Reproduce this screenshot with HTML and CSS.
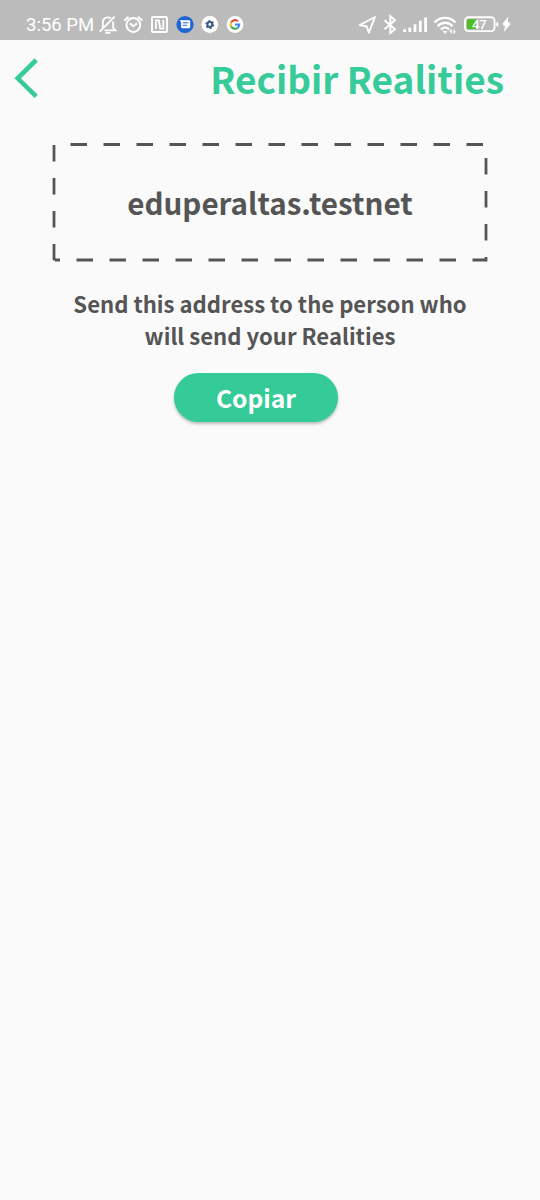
FILE: index.html
```html
<!DOCTYPE html>
<html lang="es">
<head>
<meta charset="utf-8">
<title>Recibir Realities</title>
<link rel="stylesheet" href="styles.css">
</head>
<body>
<div class="status">
  <span class="time">3:56 PM</span>
  <svg class="icons-left" width="146" height="24" viewBox="98 13 146 24" fill="none" stroke="#fff" stroke-width="1.9">
    <path d="M104.500 30.400H115.500L113.200 27.800V21.500M102.800 27.800V23c0-3.500 2.100-5.600 5-5.600 1.200 0 2.200.300 3.100.900M99.700 31.600 114.600 16.600"/>
    <path d="M105.300 32.900h5" stroke-width="1.800"/>
    <circle cx="133.300" cy="25" r="6.900" stroke-width="2"/>
    <path d="M130 23.300 133.100 26.200 137 23.400M124.300 20.500l4.300-3.800M142.300 20.500 138 16.700" stroke-width="2"/>
    <rect x="152" y="17" width="15" height="15" rx="1" stroke-width="1.900"/>
    <path d="M155.900 28.900V20.300H158.900L160.200 27.600M158.900 21.500 160.200 28.600H163.300V19.900" stroke-width="1.700"/>
    <g stroke="none">
      <circle cx="185" cy="24.500" r="8.600" fill="#1f66d2"/>
      <path d="M179.300 20.300h9.700a1.200 1.200 0 0 1 1.200 1.200v5.500a1.200 1.200 0 0 1-1.200 1.200h-6.700a1.200 1.200 0 0 1-1.200-1.200v-5z" fill="#fff"/>
      <path d="M182.800 22.800h5.600M182.800 25.300h4.200" stroke="#1f66d2" stroke-width="1"/>
      <circle cx="209.800" cy="24.500" r="8.400" fill="#fff"/>
      <circle cx="235" cy="24.500" r="8.400" fill="#fff"/>
    </g>
    <circle cx="209.800" cy="24.500" r="2.400" stroke="#3c5b84" stroke-width="2"/>
    <circle cx="209.800" cy="24.500" r="3.800" stroke="#3c5b84" stroke-width="1.300" stroke-dasharray="2 1.979"/>
    <g stroke-width="2">
      <path d="M238 21.300a4.300 4.300 0 0 0-6.900 1.300" stroke="#ea4335"/>
      <path d="M231.100 22.600a4.300 4.300 0 0 0 0 4" stroke="#fbbc05"/>
      <path d="M231.100 26.600a4.300 4.300 0 0 0 6.600 1.100" stroke="#34a853"/>
      <path d="M237.700 27.700a4.300 4.300 0 0 0 1.500-3.200H235" stroke="#4285f4"/>
    </g>
  </svg>
  <svg class="icons-right" width="154" height="24" viewBox="358 13 154 24" fill="none" stroke="#fff" stroke-width="1.900">
    <path d="M359.800 25 375 17 368.800 32.800 366.800 26.500z" stroke-linejoin="round"/>
    <path d="M384.500 20.300 395 29.200 390.300 33V16.200L395 20.300 384.500 29.200"/>
    <path d="M404.600 32v-2.800M409.800 32v-4.500M415 32v-7.800M420.300 32v-11.200M425.600 32v-14.500" stroke-width="2.800"/>
    <path d="M434.500 22.500c6-6.300 15-6.300 21 0M437.500 26.200c4.500-4.600 10.700-4.600 15.200 0M440.900 29.500c2.600-2.600 5.800-2.600 8.400 0" stroke-width="2.300"/>
    <path d="M443 31.300h4l-2 2.200zM449.800 31.500l1.600-2v4M455.400 31.500l-1.600 2v-4" fill="#fff" stroke-width=".8"/>
    <rect x="465" y="17.300" width="29.600" height="13.800" rx="3.500"/>
    <path d="M468.500 19.300h8.300v9.800h-8.300a1.500 1.500 0 0 1-1.500-1.500v-6.800a1.500 1.500 0 0 1 1.500-1.500z" fill="#4fbf1f" stroke="none"/>
    <path d="M497.300 22.300v4.200" stroke-width="2"/>
    <text class="battery" x="479.300" y="28.800" text-anchor="middle">47</text>
    <path d="M508.300 16.500 502 24.500h2.800l-2 1.600h2.200l-1 6 7-8.500h-2.700l2-1.700h-2.500z" fill="#fff" stroke="none"/>
  </svg>
</div>
<header class="header">
  <svg class="back" width="24" height="40" viewBox="0 0 24 40" fill="none" stroke="#36cb98" stroke-width="4.600"><path d="M22.200 2 3.700 20.300 22.200 38.400"/></svg>
  <h1 class="title">Recibir Realities</h1>
</header>
<main class="content">
  <div class="address">
    <svg class="dashes" width="436" height="120" viewBox="52 142 436 120" fill="none" stroke="#555" stroke-width="2.800" stroke-dasharray="16.500">
      <path d="M70.500 144.500H486V260H55"/><path d="M55 260 54 259V144.500"/>
    </svg>
    <span class="account">eduperaltas.testnet</span>
  </div>
  <p class="note">Send this address to the person who<br>will send your Realities</p>
  <button class="copy">Copiar</button>
</main>
</body>
</html>
```
FILE: styles.css
```css
body {
  margin: 0;
  min-height: 1200px;
  background: #fafafa;
  color: #555;
  font-family: "Noto Sans CJK SC", "Noto Sans", sans-serif;
  font-weight: 700;
}
.status {
  height: 40px;
  box-sizing: border-box;
  padding: 13px 28px 0 26px;
  display: flex;
  background: #bbb;
}
.time {
  width: 72px;
  white-space: nowrap;
  font: 400 18.5px/24px Roboto, sans-serif;
  color: #fff;
}
.icons-right { margin-left: auto; }
.battery {
  font: 500 13px Roboto, sans-serif;
  fill: #fff;
  stroke: none;
}
.header {
  height: 76px;
  padding: 0 36px 0 14px;
  display: flex;
  align-items: center;
  justify-content: space-between;
}
.title {
  margin: 0;
  font-size: 37px;
  line-height: 54px;
  color: #36cb98;
  white-space: nowrap;
}
.content {
  padding-top: 26px;
  display: flex;
  flex-direction: column;
  align-items: center;
}
.address {
  display: grid;
  place-items: center;
  width: 436px;
  height: 120px;
}
.dashes, .account { grid-area: 1 / 1; }
.account {
  padding-top: 1px;
  font-size: 29.600px;
  line-height: 44px;
}
.note {
  margin: 25px 0 0;
  font-size: 22.100px;
  line-height: 32px;
  text-align: center;
  white-space: nowrap;
}
.copy {
  width: 164px;
  height: 49px;
  margin: 22px 28px 0 0;
  padding: 0;
  border: 0;
  border-radius: 25px;
  background: #34cb98;
  box-shadow: 0 2px 3px rgba(0, 0, 0, .25);
  color: #fff;
  font: inherit;
  font-size: 24.600px;
  line-height: 49px;
}
```
